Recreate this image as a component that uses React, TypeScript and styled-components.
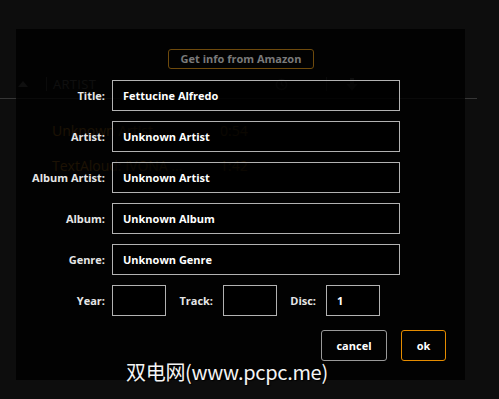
import React from "react";
import styled, { createGlobalStyle } from "styled-components";

const Global = createGlobalStyle`
  html, body { margin: 0; padding: 0; background: #0d0d0d; }
  body { width: 499px; height: 399px; overflow: hidden; font-family: "Open Sans", "Noto Sans", sans-serif; }
  #root { width: 499px; height: 399px; }
`;

const Stage = styled.div`
  position: relative;
  width: 499px;
  height: 399px;
  background: #0d0d0d;
  overflow: hidden;
`;

/* background app (visible through the translucent dialog) */
const BgApp = styled.div`
  display: flex;
  flex-direction: column;
  padding-top: 70px;
  width: 477px;
`;

const HeaderRow = styled.div`
  display: flex;
  align-items: center;
  height: 28px;
  border-bottom: 1px solid #363636;
  color: #4a4a4a;
  font-size: 13px;
`;

const HeadCell = styled.span<{ $w: number }>`
  width: ${(p) => p.$w}px;
  display: flex;
  align-items: center;
  justify-content: center;
`;

const HeadText = styled.span`
  flex: 1;
  letter-spacing: 0.3px;
`;

const Sep = styled.span`
  width: 1px;
  height: 14px;
  background: #3a3a3a;
`;

const Rows = styled.div`
  display: flex;
  flex-direction: column;
  padding-top: 14px;
`;

const TrackRow = styled.div`
  display: flex;
  align-items: center;
  height: 35px;
  padding-left: 52px;
  color: #8a5a14;
  font-size: 14px;
`;

const TrackName = styled.span`
  width: 168px;
`;

/* dialog */
const Dialog = styled.div`
  position: absolute;
  left: 16px;
  top: 29px;
  width: 449px;
  height: 351px;
  background: rgba(0, 0, 0, 0.8);
  display: flex;
  flex-direction: column;
  align-items: stretch;
  padding-top: 20px;
  box-sizing: border-box;
`;

const AmazonButton = styled.button`
  align-self: center;
  width: 146px;
  height: 20px;
  margin-left: 1px;
  border: 1px solid #6e4a0c;
  border-radius: 3px;
  background: transparent;
  color: #7a7a7a;
  font-family: "Open Sans", sans-serif;
  font-weight: 700;
  font-size: 11px;
  padding: 0;
  line-height: 18px;
`;

const Form = styled.div`
  display: grid;
  grid-template-columns: 89px 288px;
  column-gap: 7px;
  row-gap: 10px;
  margin-top: 11px;
  align-items: center;
`;

const Label = styled.label`
  color: #e6e6e6;
  font-weight: 700;
  font-size: 11px;
  text-align: right;
  white-space: nowrap;
`;

const Field = styled.div<{ $w?: number }>`
  box-sizing: border-box;
  width: ${(p) => (p.$w ? `${p.$w}px` : "100%")};
  height: 31px;
  border: 1px solid #b2b2b2;
  background: rgba(0, 0, 0, 0.6);
  color: #fff;
  font-weight: 700;
  font-size: 11px;
  display: flex;
  align-items: center;
  padding-left: 10px;
`;

const NumRow = styled.div`
  display: flex;
  align-items: center;
`;

const InlineLabel = styled(Label)<{ $w: number }>`
  width: ${(p) => p.$w}px;
  margin-right: 10px;
`;

const Actions = styled.div`
  display: flex;
  justify-content: flex-end;
  gap: 14px;
  margin-top: 14px;
  padding-right: 19px;
`;

const ActionButton = styled.button<{ $primary?: boolean; $w: number }>`
  width: ${(p) => p.$w}px;
  height: 31px;
  border: 1px solid ${(p) => (p.$primary ? "#e58c00" : "#9a9a9a")};
  border-radius: 3px;
  background: transparent;
  color: #fff;
  font-family: "Open Sans", sans-serif;
  font-weight: 700;
  font-size: 11px;
  padding: 0;
`;

const Watermark = styled.div`
  position: absolute;
  left: 126px;
  top: 357px;
  color: #f4f4f4;
  font-family: "Noto Sans CJK SC", sans-serif;
  font-size: 20px;
  white-space: nowrap;
  text-shadow: 1px 1px 1px #000;
  letter-spacing: -0.3px;
`;

const ClockIcon = () => (
  <svg width="13" height="13" viewBox="0 0 14 14" fill="none" stroke="#404040" strokeWidth="1.5">
    <circle cx="7" cy="7" r="5.5" />
    <path d="M7 3.5V7l2 1.5" />
  </svg>
);

const DownIcon = () => (
  <svg width="12" height="13" viewBox="0 0 12 13" fill="#454545">
    <path d="M4 0h4v6h3.5L6 12.5 0.5 6H4z" />
  </svg>
);

const UpTri = () => (
  <svg width="10" height="6" viewBox="0 0 10 6" fill="#4a4a4a">
    <path d="M0 6L5 0l5 6z" />
  </svg>
);

export default function App() {
  const fields: [string, string][] = [
    ["Title:", "Fettucine Alfredo"],
    ["Artist:", "Unknown Artist"],
    ["Album Artist:", "Unknown Artist"],
    ["Album:", "Unknown Album"],
    ["Genre:", "Unknown Genre"],
  ];
  return (
    <>
      <Global />
      <Stage>
        <BgApp>
          <HeaderRow>
            <HeadCell $w={46}>
              <UpTri />
            </HeadCell>
            <Sep />
            <HeadCell $w={6} />
            <HeadText>ARTIST</HeadText>
            <HeadCell $w={90}>
              <ClockIcon />
            </HeadCell>
            <Sep />
            <HeadCell $w={50}>
              <DownIcon />
            </HeadCell>
            <HeadCell $w={100} />
          </HeaderRow>
          <Rows>
            <TrackRow>
              <TrackName>Unknown Artist</TrackName>
              <span>0:54</span>
            </TrackRow>
            <TrackRow>
              <TrackName>TextAloud: IVONA ...</TrackName>
              <span>1:42</span>
            </TrackRow>
          </Rows>
        </BgApp>

        <Dialog>
          <AmazonButton>Get info from Amazon</AmazonButton>
          <Form>
            {fields.map(([l, v]) => (
              <React.Fragment key={l}>
                <Label>{l}</Label>
                <Field>{v}</Field>
              </React.Fragment>
            ))}
            <Label>Year:</Label>
            <NumRow>
              <Field $w={54} />
              <InlineLabel $w={47}>Track:</InlineLabel>
              <Field $w={54} />
              <InlineLabel $w={39}>Disc:</InlineLabel>
              <Field $w={54}>1</Field>
            </NumRow>
          </Form>
          <Actions>
            <ActionButton $w={66}>cancel</ActionButton>
            <ActionButton $w={45} $primary>
              ok
            </ActionButton>
          </Actions>
        </Dialog>

        <Watermark>双电网(www.pcpc.me)</Watermark>
      </Stage>
    </>
  );
}
